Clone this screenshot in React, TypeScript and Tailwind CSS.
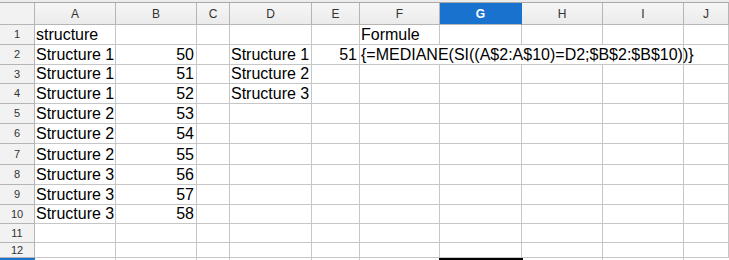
import React from 'react';

const COLS = ['A', 'B', 'C', 'D', 'E', 'F', 'G', 'H', 'I', 'J'];

// row heights include the 1px bottom grid line
const ROW_H = ['h-[20px]', 'h-[20px]', 'h-[19px]', 'h-[20px]', 'h-[20px]', 'h-[20px]', 'h-[21px]', 'h-[20px]', 'h-[20px]', 'h-[19px]', 'h-[19px]', 'h-[15px]'];

const CELLS: Record<string, string> = {
  A1: 'structure',
  A2: 'Structure 1', A3: 'Structure 1', A4: 'Structure 1',
  A5: 'Structure 2', A6: 'Structure 2', A7: 'Structure 2',
  A8: 'Structure 3', A9: 'Structure 3', A10: 'Structure 3',
  B2: '50', B3: '51', B4: '52', B5: '53', B6: '54', B7: '55', B8: '56', B9: '57', B10: '58',
  D2: 'Structure 1', D3: 'Structure 2', D4: 'Structure 3',
  E2: '51',
  F1: 'Formule',
  F2: '{=MEDIANE(SI((A$2:A$10)=D2;$B$2:$B$10))}',
};

const NUMERIC = new Set(['B', 'E']);

const GRID = 'grid grid-cols-[35px_81px_81px_33px_82px_48px_80px_82px_81px_81px_1fr]';

export default function App() {
  const rows = Array.from({ length: 12 }, (_, i) => i + 1);

  return (
    <div className="w-[729px] h-[260px] overflow-hidden bg-white font-['Liberation_Sans',Arial,sans-serif] select-none">
      <div className="h-[3px] bg-[#ececec] border-b border-[#a9a9a9]" />

      {/* Column headers */}
      <div className={GRID}>
        <div className="h-[22px] bg-[#f2f2f2] border-r border-b border-[#b5b5b5]" />
        {COLS.map((c) => (
          <div
            key={c}
            className={`h-[22px] flex items-center justify-center text-[12px] border-r border-b ${
              c === 'G'
                ? 'bg-[#1a72cf] text-white font-bold border-[#1a72cf] border-b-[#b5b5b5]'
                : 'bg-gradient-to-b from-[#f6f6f6] to-[#ebebeb] text-[#333] border-[#b5b5b5]'
            }`}
          >
            {c}
          </div>
        ))}
      </div>

      {/* Body */}
      {rows.map((r, ri) => (
        <div key={r} className={GRID}>
          <div
            className={`${ROW_H[ri]} bg-[#f2f2f2] border-r border-b border-[#b5b5b5] flex items-center justify-center text-[11px] text-[#333]`}
          >
            {r}
          </div>
          {COLS.map((c) => {
            const v = CELLS[`${c}${r}`];
            const spill = r === 2 && (c === 'F' || c === 'G' || c === 'H');
            return (
              <div
                key={c}
                className={`${ROW_H[ri]} relative border-b border-[#c6c6c6] flex items-end text-[16px] leading-[17px] text-black ${
                  spill ? '' : 'border-r'
                } ${NUMERIC.has(c) ? 'justify-end pr-[2px]' : 'pl-[1px]'}`}
              >
                {v && (
                  <span className={`whitespace-nowrap pb-[1px] ${c === 'F' ? 'relative z-10' : ''}`}>{v}</span>
                )}
              </div>
            );
          })}
        </div>
      ))}

      {/* Row 13 (active row, cut off) */}
      <div className={GRID}>
        <div className="h-[3px] bg-[#1a72cf]" />
        <div className="h-[3px] border-r border-[#c6c6c6]" />
        <div className="h-[3px] border-r border-[#c6c6c6]" />
        <div className="h-[3px] border-r border-[#c6c6c6]" />
        <div className="h-[3px] border-r border-[#c6c6c6]" />
        <div className="h-[3px] border-r border-[#c6c6c6]" />
        <div className="h-[3px] border-r border-[#c6c6c6]" />
        <div className="h-[3px] bg-black -ml-[1px] mr-[-1px]" />
        <div className="h-[3px] border-r border-[#c6c6c6]" />
        <div className="h-[3px] border-r border-[#c6c6c6]" />
        <div className="h-[3px]" />
      </div>
    </div>
  );
}
